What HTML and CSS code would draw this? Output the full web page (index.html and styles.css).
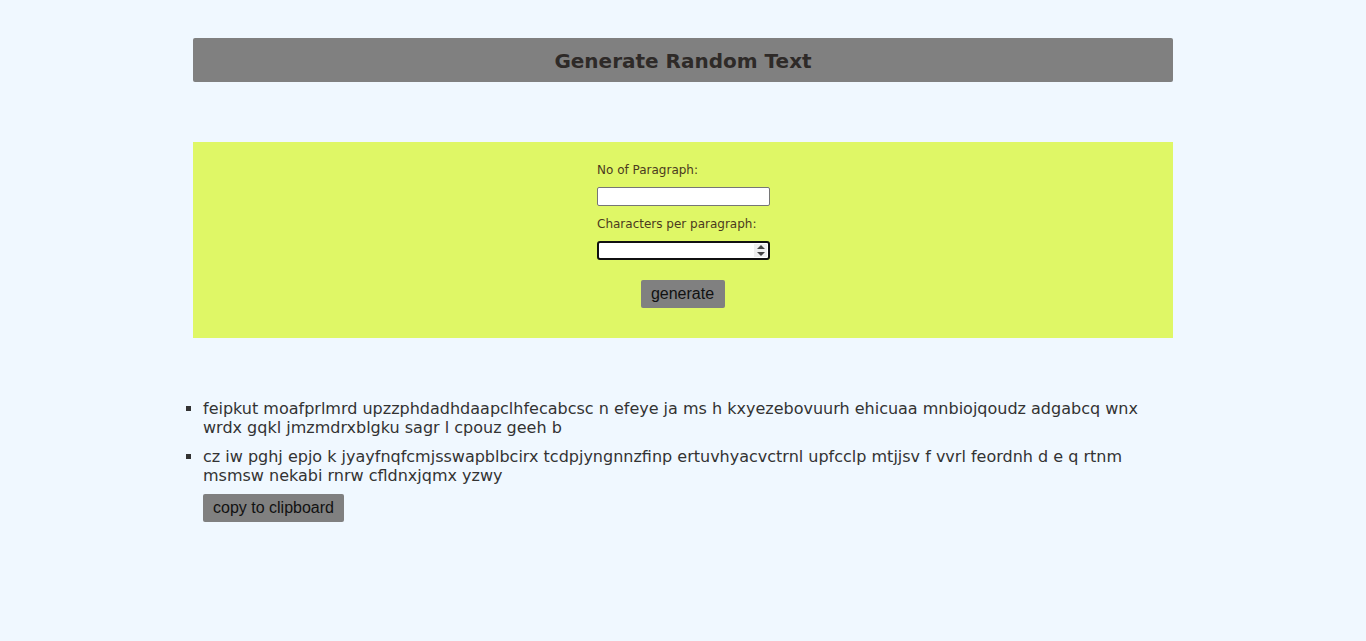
FILE: index.html
```html
<!DOCTYPE html>
<html>
<head>
<meta charset="utf-8">
<link rel="stylesheet" href="styles.css">
</head>
<body>
<div class="page">
  <header class="title-bar"><h1>Generate Random Text</h1></header>
  <section class="form-panel">
    <div class="form-col">
      <label class="lbl" for="np">No of Paragraph:</label>
      <input class="field" id="np" type="text">
      <label class="lbl" for="cp">Characters per paragraph:</label>
      <div class="field num-field"><span class="spin"><svg width="8" height="11" viewBox="0 0 8 11"><path d="M4 0 L8 4 H0Z M0 7 H8 L4 11Z" fill="#444"/></svg></span></div>
      <button class="btn gen">generate</button>
    </div>
  </section>
  <section class="output">
    <ul class="paras">
      <li>feipkut moafprlmrd upzzphdadhdaapclhfecabcsc n efeye ja ms h kxyezebovuurh ehicuaa mnbiojqoudz adgabcq wnx wrdx gqkl jmzmdrxblgku sagr l cpouz geeh b</li>
      <li>cz iw pghj epjo k jyayfnqfcmjsswapblbcirx tcdpjyngnnzfinp ertuvhyacvctrnl upfcclp mtjjsv f vvrl feordnh d e q rtnm msmsw nekabi rnrw cfldnxjqmx yzwy</li>
    </ul>
    <button class="btn copy">copy to clipboard</button>
  </section>
</div>
</body>
</html>
```

FILE: styles.css
```css
html, body {
  margin: 0;
  padding: 0;
  background: #f0f8ff;
}
body {
  font-family: "DejaVu Sans", Verdana, sans-serif;
  color: #333;
}
.page {
  width: 980px;
  margin: 0 auto;
  padding-top: 38px;
}
.title-bar {
  background: #808080;
  height: 44px;
  border-radius: 2px;
  display: flex;
  align-items: center;
  justify-content: center;
}
.title-bar h1 {
  margin: 0;
  padding-top: 1px;
  font-size: 20px;
  font-weight: bold;
  color: #2e2a28;
}
.form-panel {
  margin-top: 60px;
  background: #dff766;
  height: 196px;
  display: flex;
  justify-content: center;
}
.form-col {
  width: 173px;
  display: flex;
  flex-direction: column;
  padding-top: 21px;
  margin-left: 1px;
}
.lbl {
  font-size: 12px;
  color: #4b3a1e;
  height: 15px;
  line-height: 15px;
  margin-bottom: 9px;
  white-space: nowrap;
}
.field {
  box-sizing: border-box;
  width: 173px;
  height: 19px;
  border: 1px solid #767676;
  border-radius: 2px;
  background: #fff;
  margin: 0 0 11px 0;
  padding: 0;
}
.num-field {
  border: 2px solid #101010;
  border-radius: 3px;
  display: flex;
  justify-content: flex-end;
  align-items: stretch;
  margin-bottom: 20px;
}
.spin {
  width: 13px;
  background: #efefef;
  display: flex;
  align-items: center;
  justify-content: center;
  margin: 1px;
}
.btn {
  font-family: "Liberation Sans", Arial, sans-serif;
  font-size: 16px;
  color: #111;
  background: #808080;
  border: none;
  border-radius: 2px;
  height: 28px;
  padding: 0 10px;
}
.gen {
  align-self: center;
  width: 84px;
  padding: 0;
  margin-right: 2px;
}
.output {
  padding-left: 10px;
  margin-top: 61px;
}
.paras {
  list-style: square;
  margin: 0;
  padding-left: 0;
  font-size: 16px;
  line-height: 19px;
  color: #333;
}
.paras li {
  margin-bottom: 10px;
}
.paras li:last-child {
  margin-bottom: 9px;
}
.copy {
  height: 28px;
}
```
